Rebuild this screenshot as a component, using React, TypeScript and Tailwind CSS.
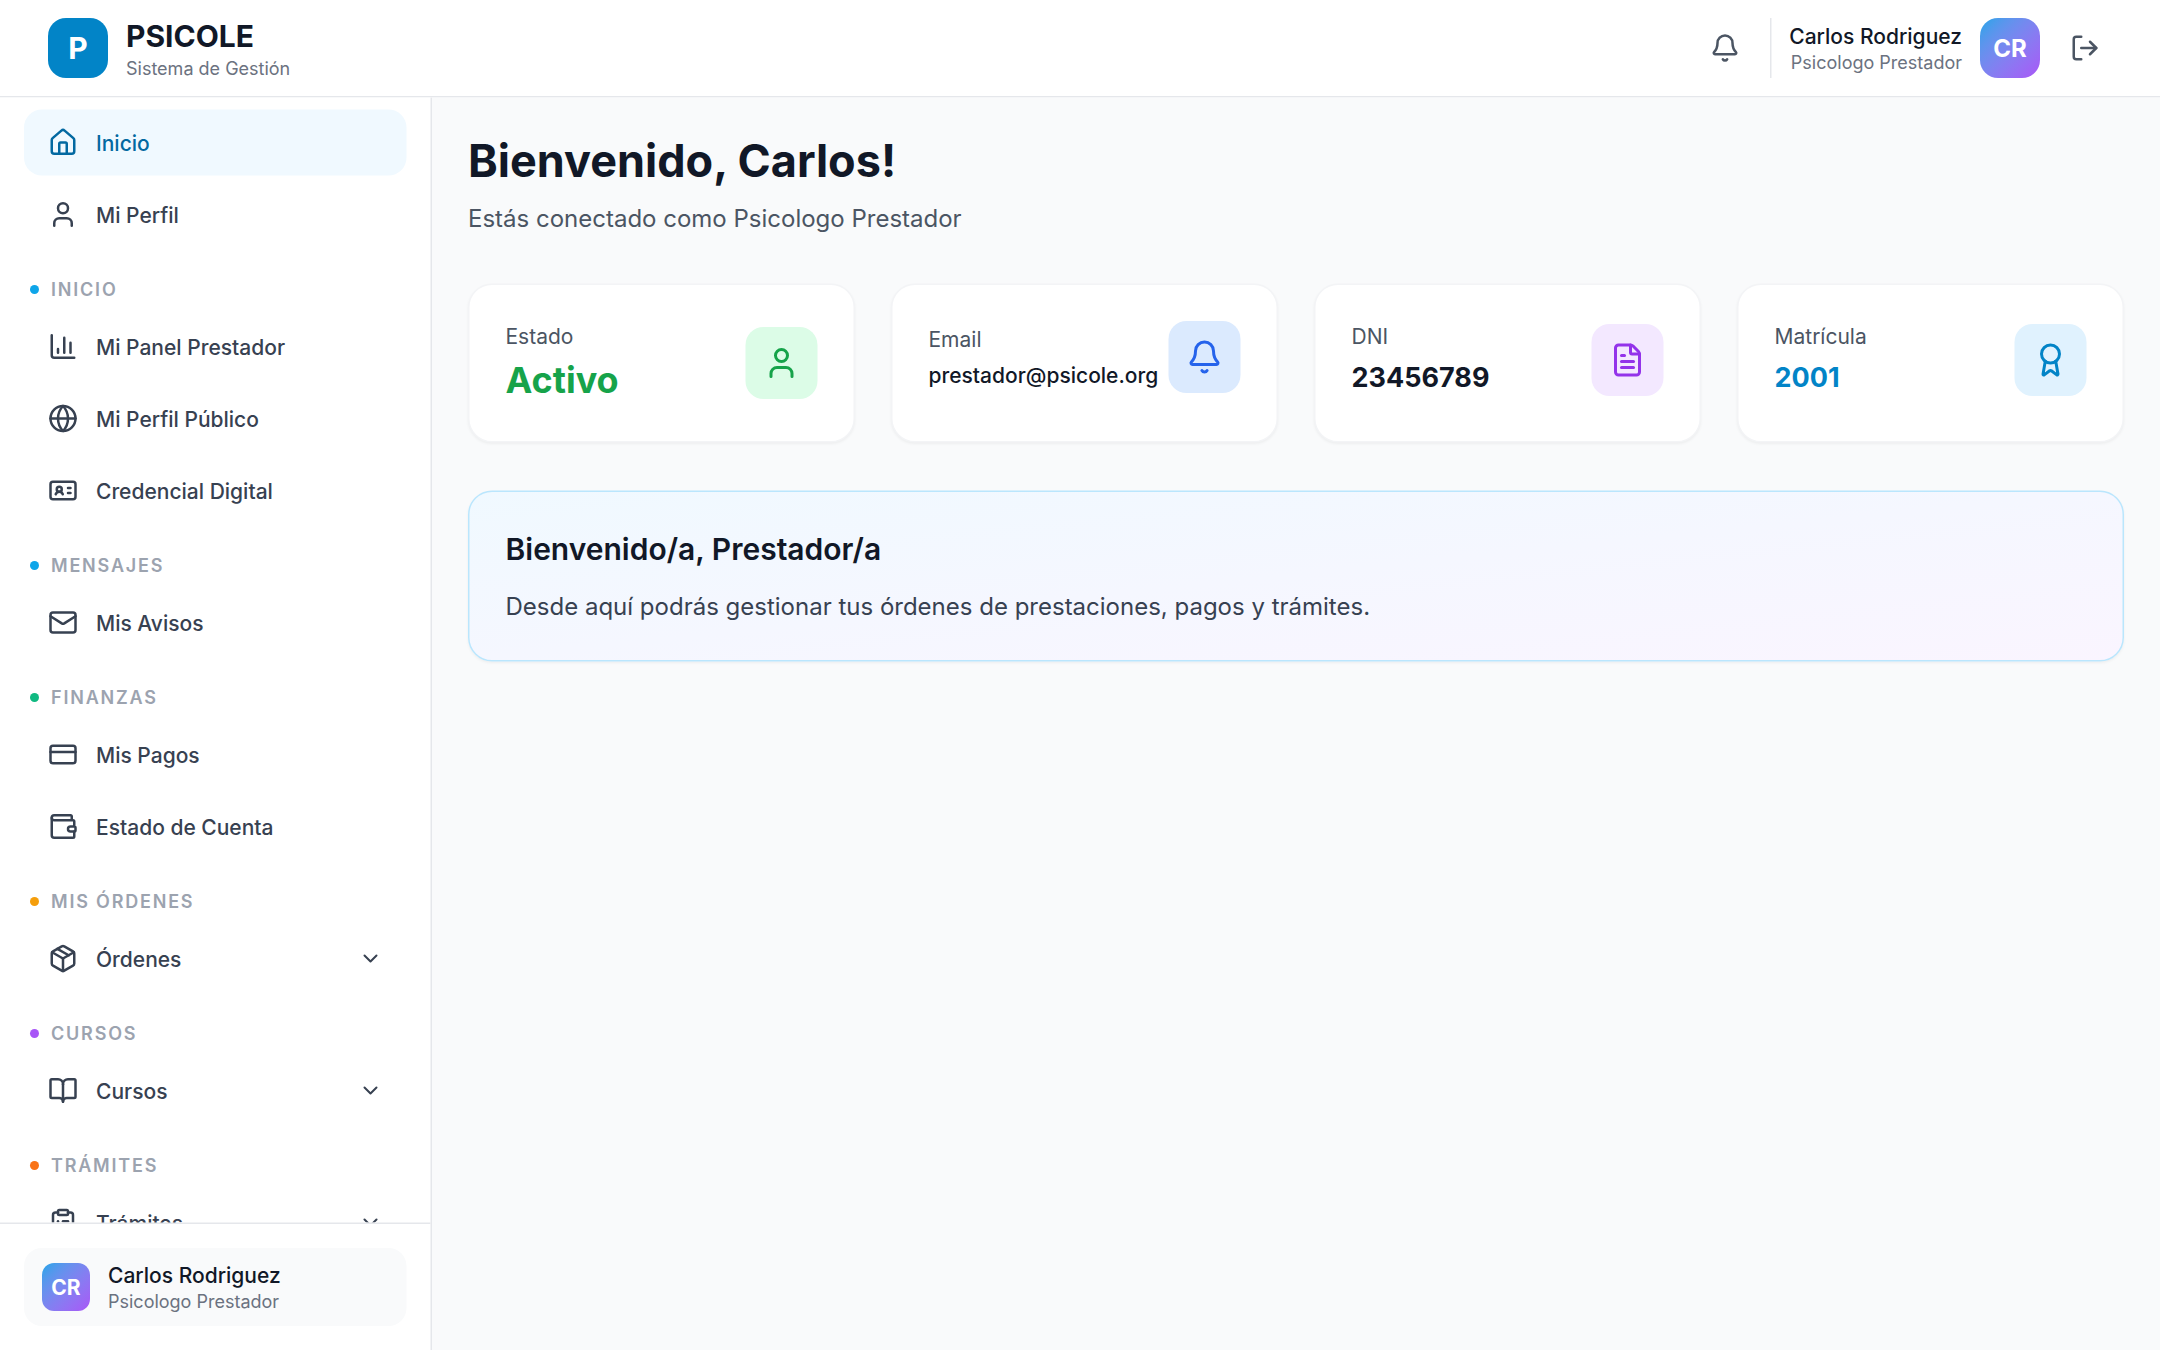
import type { ComponentType } from "react";
import {
  Award,
  Bell,
  BookOpen,
  ChartColumn,
  ChevronDown,
  ClipboardList,
  CreditCard,
  FileText,
  Globe,
  House,
  IdCard,
  LogOut,
  Mail,
  Package,
  User,
  Wallet,
} from "lucide-react";

type Item = { label: string; icon: ComponentType<{ className?: string }>; active?: boolean; chevron?: boolean };
type Section = { title?: string; dot?: string; items: Item[] };

const sections: Section[] = [
  {
    items: [
      { label: "Inicio", icon: House, active: true },
      { label: "Mi Perfil", icon: User },
    ],
  },
  {
    title: "Inicio",
    dot: "bg-[#0ea5e9]",
    items: [
      { label: "Mi Panel Prestador", icon: ChartColumn },
      { label: "Mi Perfil Público", icon: Globe },
      { label: "Credencial Digital", icon: IdCard },
    ],
  },
  { title: "Mensajes", dot: "bg-[#0ea5e9]", items: [{ label: "Mis Avisos", icon: Mail }] },
  {
    title: "Finanzas",
    dot: "bg-[#10b981]",
    items: [
      { label: "Mis Pagos", icon: CreditCard },
      { label: "Estado de Cuenta", icon: Wallet },
    ],
  },
  { title: "Mis Órdenes", dot: "bg-[#f59e0b]", items: [{ label: "Órdenes", icon: Package, chevron: true }] },
  { title: "Cursos", dot: "bg-[#a855f7]", items: [{ label: "Cursos", icon: BookOpen, chevron: true }] },
  { title: "Trámites", dot: "bg-[#f97316]", items: [{ label: "Trámites", icon: ClipboardList, chevron: true }] },
];

function NavRow({ item }: { item: Item }) {
  const Icon = item.icon;
  return (
    <a
      className={
        item.active
          ? "flex h-11 shrink-0 items-center gap-3 rounded-xl bg-[#f0f9ff] px-4 text-sm font-medium text-[#0369a1]"
          : "flex h-11 shrink-0 items-center gap-3 rounded-xl px-4 text-sm font-medium text-[#374151]"
      }
    >
      <Icon className="h-5 w-5 shrink-0" />
      <span className="flex-1 translate-y-[0.5px]">{item.label}</span>
      {item.chevron && <ChevronDown className="h-4 w-4 shrink-0" />}
    </a>
  );
}

function Sidebar() {
  return (
    <aside className="flex w-72 shrink-0 flex-col border-r border-[#e5e7eb] bg-white">
      <nav className="flex min-h-0 flex-1 flex-col gap-5 overflow-hidden px-4 pt-2">
        {sections.map((s, i) => (
          <div key={i} className="flex shrink-0 flex-col">
            {s.title && (
              <div className="mb-2 flex items-center gap-2 px-1">
                <span className={`h-1.5 w-1.5 rounded-full ${s.dot}`} />
                <span className="text-xs font-semibold tracking-widest text-[#9ca3af] uppercase">{s.title}</span>
              </div>
            )}
            <div className="flex flex-col gap-1">
              {s.items.map((it) => (
                <NavRow key={it.label} item={it} />
              ))}
            </div>
          </div>
        ))}
      </nav>
      <div className="border-t border-[#e5e7eb] p-4">
        <div className="flex items-center gap-3 rounded-xl bg-[#f9fafb] px-3 py-2">
          <div className="flex h-8 w-8 items-center justify-center rounded-lg bg-gradient-to-br from-[#0ea5e9] to-[#a855f7] text-sm font-bold text-white">
            CR
          </div>
          <div>
            <p className="text-sm font-medium text-[#111827]">Carlos Rodriguez</p>
            <p className="text-xs text-[#6b7280]">Psicologo Prestador</p>
          </div>
        </div>
      </div>
    </aside>
  );
}

function Header() {
  return (
    <header className="flex shrink-0 items-center justify-between border-b border-[#e5e7eb] bg-white px-8 py-3">
      <div className="flex items-center gap-3">
        <div className="flex h-10 w-10 items-center justify-center rounded-xl bg-[#0284c7] text-xl font-bold text-white">
          P
        </div>
        <div className="flex h-10 flex-col justify-center">
          <p className="text-xl font-bold text-[#111827]">PSICOLE</p>
          <p className="text-xs text-[#6b7280]">Sistema de Gestión</p>
        </div>
      </div>
      <div className="flex items-center gap-3">
        <button className="rounded-lg p-2 text-[#4b5563]">
          <Bell className="h-5 w-5" />
        </button>
        <div className="flex items-center gap-3 border-l border-[#e5e7eb] pl-3">
          <div className="text-right">
            <p className="text-sm font-medium text-[#111827]">Carlos Rodriguez</p>
            <p className="text-xs text-[#6b7280]">Psicologo Prestador</p>
          </div>
          <div className="flex h-10 w-10 items-center justify-center rounded-xl bg-gradient-to-br from-[#0ea5e9] to-[#a855f7] font-bold text-white">
            CR
          </div>
        </div>
        <button className="rounded-lg p-2 text-[#4b5563]">
          <LogOut className="h-5 w-5" />
        </button>
      </div>
    </header>
  );
}

function StatCard({
  label,
  value,
  valueClass,
  icon: Icon,
  iconBox,
}: {
  label: string;
  value: string;
  valueClass: string;
  icon: ComponentType<{ className?: string }>;
  iconBox: string;
}) {
  return (
    <div className="rounded-2xl border border-[#f3f4f6] bg-white p-6 shadow-xs">
      <div className="flex items-center justify-between">
        <div>
          <p className="text-sm text-[#4b5563]">{label}</p>
          <p className={`mt-1 ${valueClass}`}>{value}</p>
        </div>
        <div className={`flex h-12 w-12 items-center justify-center rounded-xl ${iconBox}`}>
          <Icon className="h-6 w-6" />
        </div>
      </div>
    </div>
  );
}

export default function App() {
  return (
    <div className="h-[1350px] w-[2160px] overflow-hidden">
      <div className="flex h-[900px] w-[1440px] origin-top-left scale-150 flex-col overflow-hidden bg-[#f9fafb] font-['Inter',sans-serif]">
        <Header />
        <div className="flex min-h-0 flex-1">
          <Sidebar />
          <main className="min-w-0 flex-1 bg-[#f9fafb] p-6">
            <h1 className="text-3xl font-bold text-[#111827]">Bienvenido, Carlos!</h1>
            <p className="mt-2 text-[#4b5563]">Estás conectado como Psicologo Prestador</p>
            <div className="mt-8 grid grid-cols-4 gap-6">
              <StatCard
                label="Estado"
                value="Activo"
                valueClass="text-2xl font-bold text-[#16a34a]"
                icon={User}
                iconBox="bg-[#dcfce7] text-[#16a34a]"
              />
              <StatCard
                label="Email"
                value="prestador@psicole.org"
                valueClass="text-sm font-medium text-[#111827]"
                icon={Bell}
                iconBox="bg-[#dbeafe] text-[#2563eb]"
              />
              <StatCard
                label="DNI"
                value="23456789"
                valueClass="text-lg font-bold text-[#111827]"
                icon={FileText}
                iconBox="bg-[#f3e8ff] text-[#9333ea]"
              />
              <StatCard
                label="Matrícula"
                value="2001"
                valueClass="text-lg font-bold text-[#0284c7]"
                icon={Award}
                iconBox="bg-[#e0f2fe] text-[#0284c7]"
              />
            </div>
            <div className="mt-8 rounded-2xl border border-[#bae6fd] bg-gradient-to-br from-[#f0f9ff] to-[#faf5ff] p-6 shadow-xs">
              <h2 className="mb-3 text-xl font-semibold text-[#111827]">Bienvenido/a, Prestador/a</h2>
              <p className="text-[#374151]">Desde aquí podrás gestionar tus órdenes de prestaciones, pagos y trámites.</p>
            </div>
          </main>
        </div>
      </div>
    </div>
  );
}
